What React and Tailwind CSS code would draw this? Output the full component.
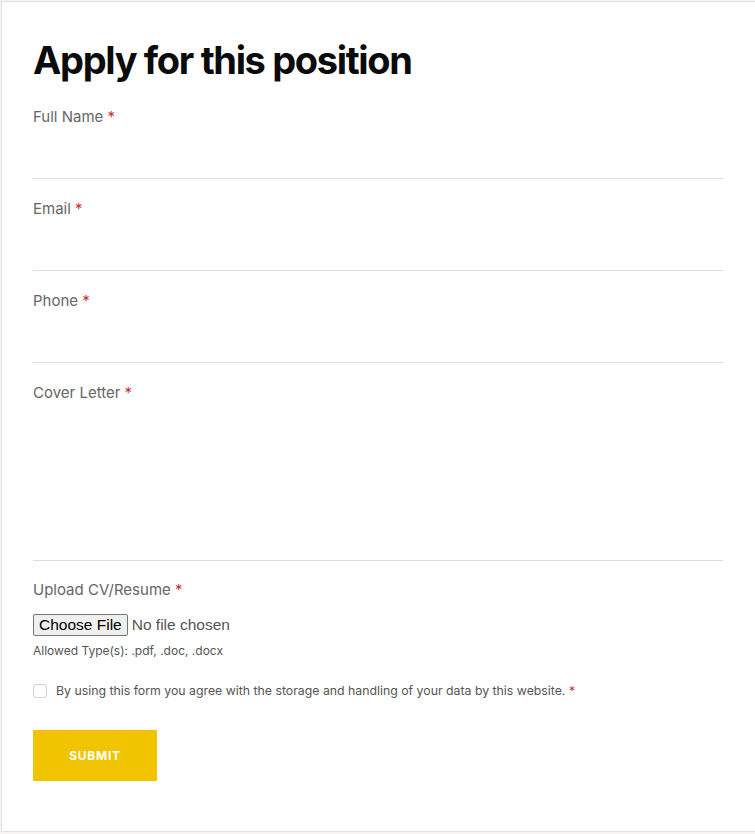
import React from "react";

function Req() {
  return <span className="text-[#c9302c]"> *</span>;
}

function Field({ label, tall }) {
  return (
    <div className="mb-[18px] flex flex-col">
      <label className="block h-[24px] text-[15px] leading-[24px] text-[#666666]">
        {label}
        <Req />
      </label>
      {tall ? (
        <textarea className="block h-[156px] w-full resize-none border-b border-[#dddddd] bg-transparent outline-none" />
      ) : (
        <input
          type="text"
          className="block h-[50px] w-full border-b border-[#dddddd] bg-transparent outline-none"
        />
      )}
    </div>
  );
}

export default function App() {
  return (
    <div
      className="min-h-[834px] overflow-hidden bg-[#f7f5f2] pl-[1px] pt-[1px]"
      style={{ fontFamily: "Inter, 'Noto Sans', sans-serif" }}
    >
      <div className="h-[831px] border-b border-l border-t border-[#e2e2e2] bg-white pl-[31px] pr-[31px] pt-[33px]">
        <h2 className="mb-[20px] text-[38px] font-bold leading-[50px] tracking-[-0.035em] text-[#0b0b0b]">
          Apply for this position
        </h2>
        <form className="w-[690px]">
          <Field label="Full Name" />
          <Field label="Email" />
          <Field label="Phone" />
          <Field label="Cover Letter" tall />
          <div className="-mt-[1px] flex flex-col">
            <label className="block h-[24px] text-[15px] leading-[24px] text-[#666666]">
              Upload CV/Resume
              <Req />
            </label>
            <input
              type="file"
              className="mt-[12px] block h-[22px] text-[15.5px] leading-[20px] text-[#555555] file:mr-[4px] file:h-[22px] file:rounded-[2px] file:border file:border-solid file:border-[#767676] file:bg-[#efefef] file:px-[5px] file:text-[15.5px] file:text-[#000000]"
              style={{ fontFamily: "'Liberation Sans', Arial, sans-serif" }}
            />
            <div className="mt-[6px] text-[12px] leading-[18px] text-[#555555]">
              Allowed Type(s): .pdf, .doc, .docx
            </div>
          </div>
          <div className="mt-[22px] flex items-center gap-[9px]">
            <span className="block h-[14px] w-[14px] rounded-[3px] border border-[#cfcfcf] bg-white" />
            <span className="text-[12.3px] leading-[18px] text-[#555555]">
              By using this form you agree with the storage and handling of your data by this website.
              <Req />
            </span>
          </div>
          <button
            type="button"
            className="mt-[30px] flex h-[51px] w-[124px] items-center justify-center bg-[#f0c400] text-[12px] font-bold uppercase tracking-[0.06em] text-white"
          >
            Submit
          </button>
        </form>
      </div>
    </div>
  );
}
